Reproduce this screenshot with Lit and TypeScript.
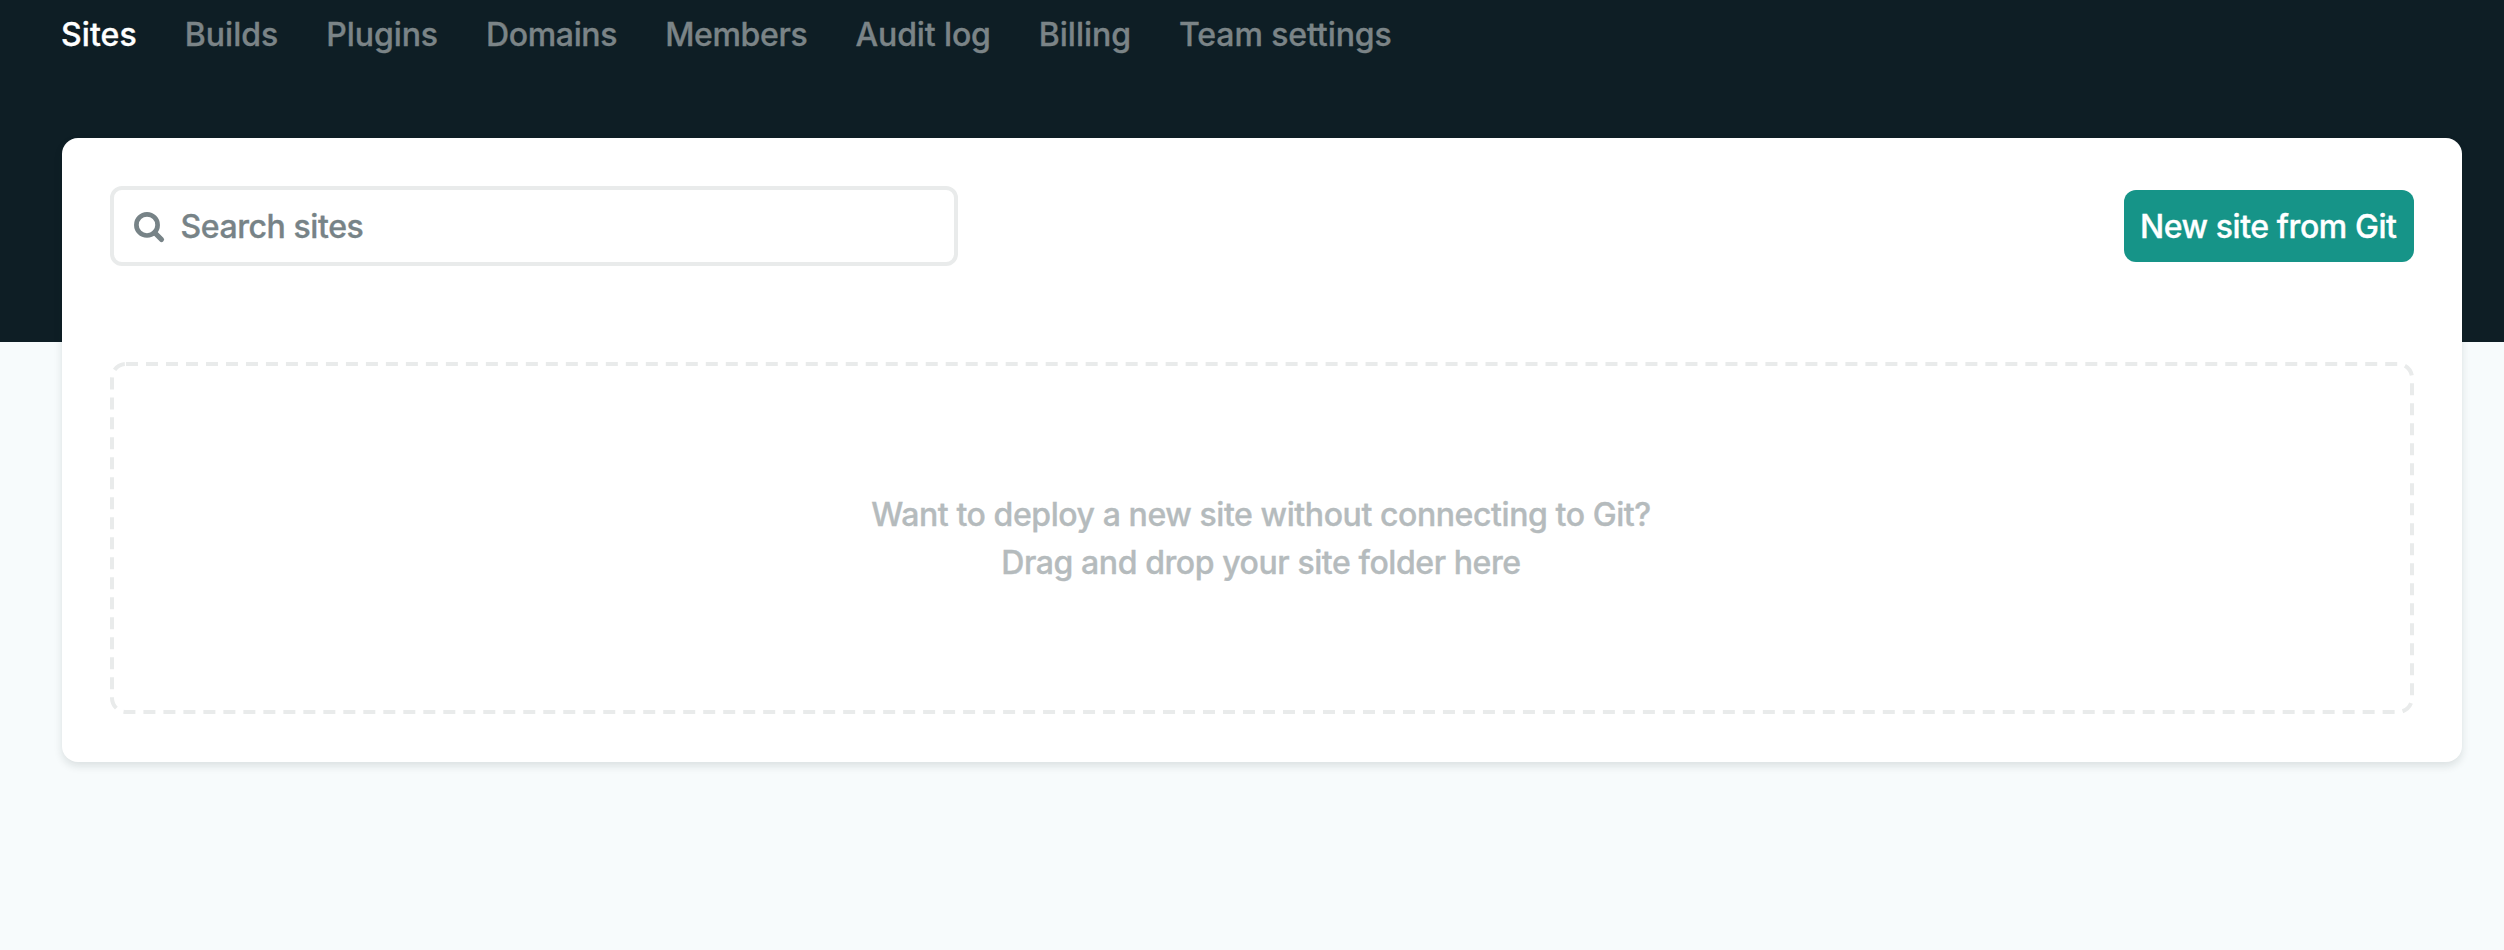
import { LitElement, html, css } from "lit";
import { customElement } from "lit/decorators.js";
import { styleMap } from "lit/directives/style-map.js";

interface NavLink {
  label: string;
  tracking: number;
}

const links: NavLink[] = [
  { label: "Sites", tracking: 0.08 },
  { label: "Builds", tracking: 0.03 },
  { label: "Plugins", tracking: -0.08 },
  { label: "Domains", tracking: -0.35 },
  { label: "Members", tracking: -0.33 },
  { label: "Audit log", tracking: -0.12 },
  { label: "Billing", tracking: -0.02 },
  { label: "Team settings", tracking: -0.1 },
];

@customElement("app-root")
export class AppRoot extends LitElement {
  static styles = css`
    :host {
      display: block;
      height: 950px;
      overflow: hidden;
      box-sizing: border-box;
      padding: 0 42px 0 61px;
      background: linear-gradient(#0e1e25 342px, #f7fbfc 342px);
      font-family: Inter, "Liberation Sans", sans-serif;
      font-size: 32px;
      font-weight: 500;
      -webkit-text-stroke: 0.35px currentColor;
      line-height: 48px;
      letter-spacing: -0.42px;
      white-space: nowrap;
    }
    .nav {
      display: flex;
      gap: 48px;
      height: 138px;
      box-sizing: border-box;
      padding-top: 11px;
      color: #7b8487;
    }
    .nav a {
      color: inherit;
    }
    .nav a:first-child {
      color: #fff;
    }
    .card {
      display: flex;
      flex-direction: column;
      box-sizing: border-box;
      height: 624px;
      margin-left: 1px;
      padding: 48px;
      border-radius: 16px;
      background: #fff;
      box-shadow: 0 4px 8px rgba(14, 30, 37, 0.12);
    }
    .toolbar {
      display: flex;
      justify-content: space-between;
      align-items: center;
      height: 80px;
      margin-bottom: 96px;
    }
    .search {
      display: flex;
      align-items: center;
      box-sizing: border-box;
      width: 848px;
      height: 80px;
      padding-left: 20px;
      border: 4px solid #e9ebeb;
      border-radius: 12px;
      color: #778387;
    }
    .search svg {
      width: 30px;
      height: 30px;
      margin-right: 16.5px;
      overflow: visible;
    }
    .placeholder {
      padding-top: 1px;
    }
    .button {
      display: flex;
      justify-content: center;
      align-items: center;
      box-sizing: border-box;
      width: 290px;
      height: 72px;
      padding: 1px 1.5px 0 0;
      border-radius: 12px;
      background: #169488;
      color: #fff;
      -webkit-text-stroke-color: #fff;
    }
    .drop {
      position: relative;
      display: flex;
      flex-direction: column;
      align-items: center;
      justify-content: center;
      box-sizing: border-box;
      height: 352px;
      padding: 1px 2px 0 0;
      color: #b5bbbd;
    }
    .outline {
      position: absolute;
      inset: 0;
      width: 100%;
      height: 100%;
    }
  `;

  render() {
    return html`
      <nav class="nav">${links.map(
        ({ label, tracking }) => html`<a style=${styleMap({ letterSpacing: `${tracking}px` })}>${label}</a>`,
      )}</nav>
      <main class="card">
        <div class="toolbar">
          <div class="search">
            <svg viewBox="0 0 30 30" fill="none" stroke="currentColor">
              <circle cx="13" cy="13.9" r="10.6" stroke-width="4.7" />
              <path d="M20.5 21.5L27.5 28.5" stroke-width="5.2" stroke-linecap="round" />
            </svg>
            <span class="placeholder">Search sites</span>
          </div>
          <div class="button"><span>New site from Git</span></div>
        </div>
        <section class="drop">
          <svg class="outline" viewBox="0 0 2304 352" fill="none" stroke="#e9ebeb" stroke-width="4">
            <path
              stroke-dasharray="12 7.993"
              d="M16 2H2288A14 14 0 0 1 2302 16V336A14 14 0 0 1 2288 350H16A14 14 0 0 1 2 336V16A14 14 0 0 1 16 2"
            />
          </svg>
          <div class="line">Want to deploy a new site without connecting to Git?</div>
          <div class="line">Drag and drop your site folder here</div>
        </section>
      </main>
    `;
  }
}
